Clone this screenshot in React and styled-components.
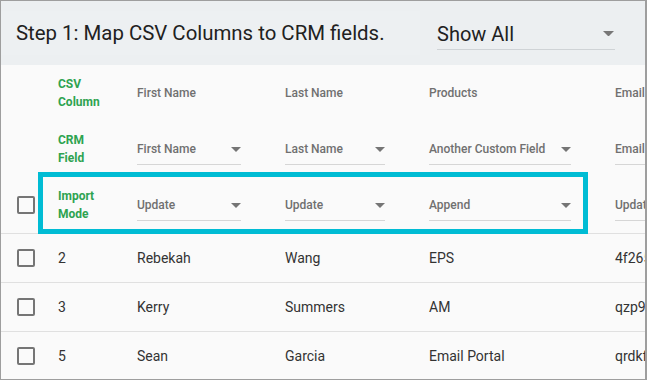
import React from 'react';
import styled, { createGlobalStyle } from 'styled-components';

const GlobalStyle = createGlobalStyle`
  html, body {
    margin: 0;
    padding: 0;
    background: #ffffff;
  }
  body {
    font-family: Roboto, "Liberation Sans", sans-serif;
  }
`;

const Frame = styled.div`
  position: relative;
  width: 647px;
  height: 380px;
  box-sizing: border-box;
  border: 1px solid #9e9e9e;
  border-right-width: 2px;
  background: #fafafa;
  overflow: hidden;
`;

const Header = styled.div`
  display: flex;
  align-items: center;
  height: 64px;
  background: #eceff1;
`;

const TitleBox = styled.div`
  display: flex;
  align-items: center;
  width: 419px;
  height: 44px;
  box-sizing: border-box;
  padding-left: 15px;
  background: #edf0f2;
  font-size: 20.4px;
  color: #212121;
  white-space: nowrap;
`;

const FilterSelect = styled.div`
  display: flex;
  align-items: center;
  justify-content: space-between;
  margin-left: 17px;
  margin-top: 2px;
  width: 178px;
  height: 32px;
  box-sizing: border-box;
  padding-right: 1px;
  border-bottom: 1px solid #cfd3d6;
  font-size: 20px;
  color: #212121;
`;

const Table = styled.div`
  position: relative;
`;

const Row = styled.div`
  display: grid;
  grid-template-columns: 57px 79px 148px 144px 186px 160px;
  align-items: center;
  height: ${(p) => (p.$head ? '56px' : '49px')};
  box-sizing: border-box;
  border-top: ${(p) => (p.$line ? '1px solid #e0e0e0' : 'none')};
  white-space: nowrap;
`;

const CheckCell = styled.div`
  padding-left: 16px;
  display: flex;
  align-items: center;
`;

const Checkbox = styled.div`
  width: 18px;
  height: 18px;
  box-sizing: border-box;
  border: 2px solid #757575;
  border-radius: 2px;
`;

const RowLabel = styled.div`
  font-size: 12px;
  font-weight: 700;
  line-height: 18px;
  color: #2ea350;
  white-space: normal;
  width: 50px;
`;

const HeadText = styled.div`
  font-size: 12px;
  font-weight: 500;
  color: #707070;
`;

const FieldSelect = styled.div`
  display: flex;
  align-items: center;
  justify-content: space-between;
  width: ${(p) => p.$w}px;
  height: 30px;
  box-sizing: border-box;
  margin-top: 1px;
  border-bottom: 1px solid #d6d6d6;
  font-size: 12px;
  font-weight: 500;
  color: #707070;
`;

const Cell = styled.div`
  font-size: 14px;
  color: #333333;
`;

const Highlight = styled.div`
  position: absolute;
  left: 37px;
  top: 107px;
  width: 550px;
  height: 62px;
  box-sizing: border-box;
  border: 5px solid #00bcd4;
  pointer-events: none;
`;

const Caret = ({ size = 10, color = '#757575' }) => (
  <svg width={size} height={size / 2} viewBox="0 0 10 5">
    <polygon points="0,0 10,0 5,5" fill={color} />
  </svg>
);

const Select = ({ w, children }) => (
  <FieldSelect $w={w}>
    <span>{children}</span>
    <Caret />
  </FieldSelect>
);

const widths = [104, 100, 142, 120];

const crmFields = ['First Name', 'Last Name', 'Another Custom Field', 'Email'];
const modes = ['Update', 'Update', 'Append', 'Update'];

const records = [
  { id: 2, first: 'Rebekah', last: 'Wang', product: 'EPS', email: '4f265c8a@mail.com' },
  { id: 3, first: 'Kerry', last: 'Summers', product: 'AM', email: 'qzp9lk@mail.com' },
  { id: 5, first: 'Sean', last: 'Garcia', product: 'Email Portal', email: 'qrdkf@mail.com' },
];

export default function App() {
  return (
    <>
      <GlobalStyle />
      <Frame>
        <Header>
          <TitleBox>Step 1: Map CSV Columns to CRM fields.</TitleBox>
          <FilterSelect>
            <span>Show All</span>
            <Caret size={11} color="#777" />
          </FilterSelect>
        </Header>
        <Table>
          <Row $head>
            <div />
            <RowLabel>CSV Column</RowLabel>
            <HeadText>First Name</HeadText>
            <HeadText>Last Name</HeadText>
            <HeadText>Products</HeadText>
            <HeadText>Email</HeadText>
          </Row>
          <Row $head>
            <div />
            <RowLabel>CRM Field</RowLabel>
            {crmFields.map((f, i) => (
              <Select key={i} w={widths[i]}>{f}</Select>
            ))}
          </Row>
          <Row $head>
            <CheckCell>
              <Checkbox />
            </CheckCell>
            <RowLabel>Import Mode</RowLabel>
            {modes.map((m, i) => (
              <Select key={i} w={widths[i]}>{m}</Select>
            ))}
          </Row>
          {records.map((r) => (
            <Row key={r.id} $line>
              <CheckCell>
                <Checkbox />
              </CheckCell>
              <Cell>{r.id}</Cell>
              <Cell>{r.first}</Cell>
              <Cell>{r.last}</Cell>
              <Cell>{r.product}</Cell>
              <Cell>{r.email}</Cell>
            </Row>
          ))}
          <Highlight />
        </Table>
      </Frame>
    </>
  );
}
